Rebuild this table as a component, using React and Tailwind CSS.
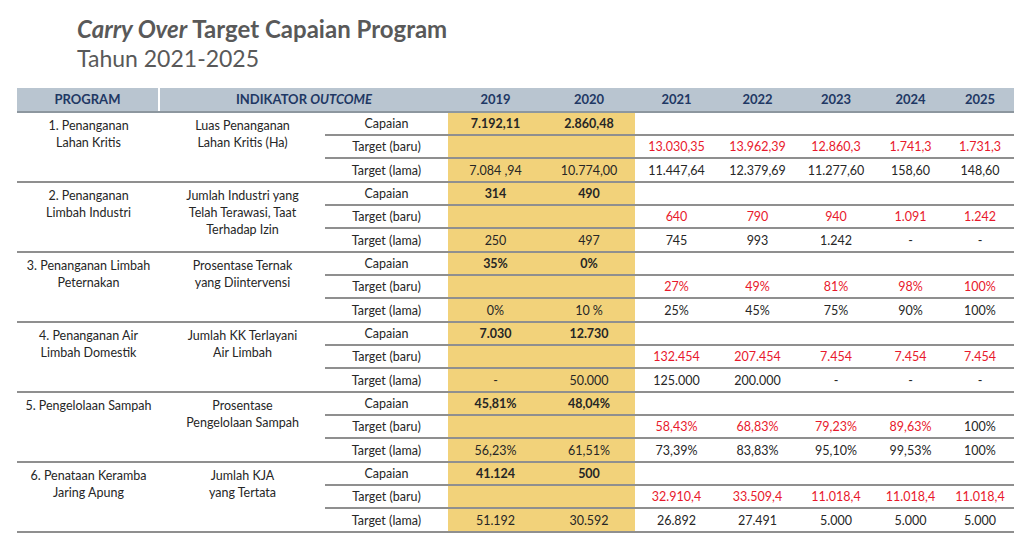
import React from "react";

const years = ["2019", "2020", "2021", "2022", "2023", "2024", "2025"];
const yearWidths = ["w-[95px]", "w-[92px]", "w-[83px]", "w-[79px]", "w-[78px]", "w-[71px]", "w-[68px]"];

const programs = [
  {
    name: ["1. Penanganan", "Lahan Kritis"],
    indikator: ["Luas Penanganan", "Lahan Kritis (Ha)"],
    capaian: ["7.192,11", "2.860,48"],
    baru: ["13.030,35", "13.962,39", "12.860,3", "1.741,3", "1.731,3"],
    baruRed: [true, true, true, true, true],
    lama: ["7.084 ,94", "10.774,00", "11.447,64", "12.379,69", "11.277,60", "158,60", "148,60"],
  },
  {
    name: ["2. Penanganan", "Limbah Industri"],
    indikator: ["Jumlah Industri yang", "Telah Terawasi, Taat", "Terhadap Izin"],
    capaian: ["314", "490"],
    baru: ["640", "790", "940", "1.091", "1.242"],
    baruRed: [true, true, true, true, true],
    lama: ["250", "497", "745", "993", "1.242", "-", "-"],
  },
  {
    name: ["3. Penanganan Limbah", "Peternakan"],
    indikator: ["Prosentase Ternak", "yang Diintervensi"],
    capaian: ["35%", "0%"],
    baru: ["27%", "49%", "81%", "98%", "100%"],
    baruRed: [true, true, true, true, true],
    lama: ["0%", "10 %", "25%", "45%", "75%", "90%", "100%"],
  },
  {
    name: ["4. Penanganan Air", "Limbah Domestik"],
    indikator: ["Jumlah KK Terlayani", "Air Limbah"],
    capaian: ["7.030", "12.730"],
    baru: ["132.454", "207.454", "7.454", "7.454", "7.454"],
    baruRed: [true, true, true, true, true],
    lama: ["-", "50.000", "125.000", "200.000", "-", "-", "-"],
  },
  {
    name: ["5. Pengelolaan Sampah"],
    indikator: ["Prosentase", "Pengelolaan Sampah"],
    capaian: ["45,81%", "48,04%"],
    baru: ["58,43%", "68,83%", "79,23%", "89,63%", "100%"],
    baruRed: [true, true, true, true, false],
    lama: ["56,23%", "61,51%", "73,39%", "83,83%", "95,10%", "99,53%", "100%"],
  },
  {
    name: ["6. Penataan Keramba", "Jaring Apung"],
    indikator: ["Jumlah KJA", "yang Tertata"],
    capaian: ["41.124", "500"],
    baru: ["32.910,4", "33.509,4", "11.018,4", "11.018,4", "11.018,4"],
    baruRed: [true, true, true, true, true],
    lama: ["51.192", "30.592", "26.892", "27.491", "5.000", "5.000", "5.000"],
  },
];

function Cell({ i, children, bold, red }) {
  return (
    <div
      className={`${yearWidths[i]} pt-[2px] flex items-center justify-center ${i < 2 ? "bg-[#f2d27a]" : ""} ${
        bold ? "font-bold" : ""
      } ${red ? "text-[#e8192c]" : ""}`}
    >
      {children}
    </div>
  );
}

function SubRow({ label, cells, border }) {
  return (
    <div className={`flex ${border ? "h-[23px] border-b-2 border-[#8f8f8f]" : "h-[22px]"}`}>
      <div className="w-[123px] pt-[2px] flex items-center justify-center">{label}</div>
      {cells}
    </div>
  );
}

function ProgramBlock({ p }) {
  return (
    <div className="flex border-b-2 border-[#8f8f8f]">
      <div className="w-[143px] pt-[4px] text-center leading-[17px]">
        {p.name.map((l) => (
          <div key={l}>{l}</div>
        ))}
      </div>
      <div className="w-[165px] pt-[4px] text-center leading-[17px]">
        {p.indikator.map((l) => (
          <div key={l}>{l}</div>
        ))}
      </div>
      <div className="flex flex-col">
        <SubRow
          label="Capaian"
          border
          cells={years.map((y, i) => (
            <Cell key={y} i={i} bold>
              {i < 2 ? p.capaian[i] : ""}
            </Cell>
          ))}
        />
        <SubRow
          label="Target (baru)"
          border
          cells={years.map((y, i) => (
            <Cell key={y} i={i} red={i >= 2 && p.baruRed[i - 2]}>
              {i < 2 ? "" : p.baru[i - 2]}
            </Cell>
          ))}
        />
        <SubRow
          label="Target (lama)"
          cells={years.map((y, i) => (
            <Cell key={y} i={i}>
              {p.lama[i]}
            </Cell>
          ))}
        />
      </div>
    </div>
  );
}

export default function App() {
  return (
    <div className="w-[1035px] h-[546px] bg-white overflow-hidden font-['Lato',sans-serif]">
      <div className="pl-[77px] pt-[14px] text-[#595959]">
        <div className="text-[24px] font-bold leading-[30px]">
          <span className="italic">Carry Over</span> Target Capaian Program
        </div>
        <div className="text-[23px] leading-[28px]">Tahun 2021-2025</div>
      </div>
      <div className="ml-[17px] mt-[16px] w-[997px] text-[12.5px] text-[#262626]">
        <div className="flex h-[25px] bg-[#b9c5d0] border-b-2 border-[#8d979f] font-bold text-[13px] text-[#1f3864]">
          <div className="w-[143px] flex items-center justify-center border-r-2 border-white">PROGRAM</div>
          <div className="w-[288px] flex items-center justify-center">
            INDIKATOR&nbsp;<span className="italic">OUTCOME</span>
          </div>
          {years.map((y, i) => (
            <div key={y} className={`${yearWidths[i]} flex items-center justify-center`}>
              {y}
            </div>
          ))}
        </div>
        {programs.map((p) => (
          <ProgramBlock key={p.name[0]} p={p} />
        ))}
      </div>
    </div>
  );
}
